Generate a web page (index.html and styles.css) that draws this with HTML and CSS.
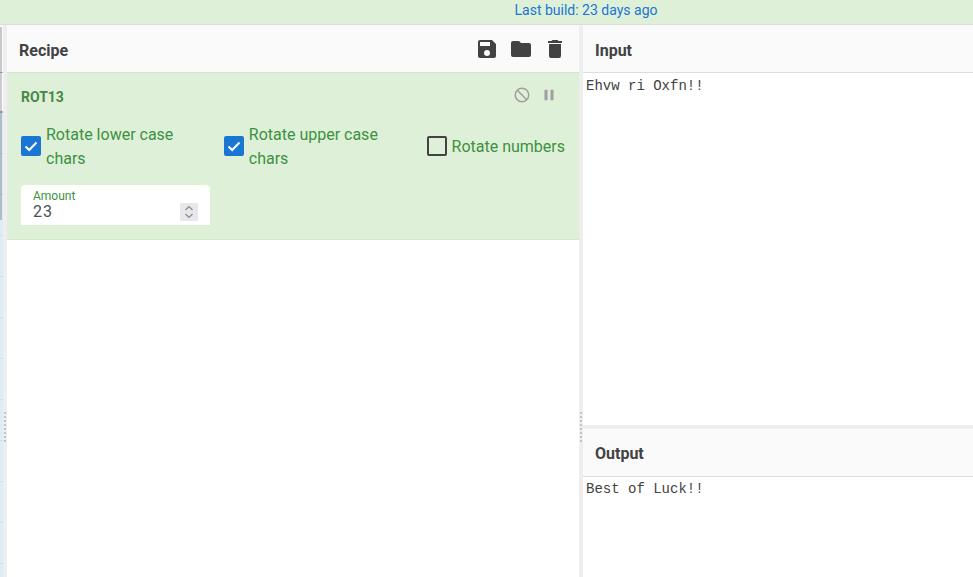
FILE: index.html
```html
<!DOCTYPE html>
<html lang="en">
<head>
<meta charset="utf-8">
<title>CyberChef</title>
<link rel="stylesheet" href="styles.css">
</head>
<body>
<div class="banner"><a class="build">Last build: 23 days ago</a></div>
<div class="workspace">
  <div class="sliver">
    <div class="sliver-top"></div>
    <div class="sliver-rows"></div>
    <div class="sliver-thumb"></div>
  </div>
  <div class="gutter"><span class="grip"></span></div>
  <section class="recipe">
    <header class="head">
      <span class="title">Recipe</span>
      <div class="head-icons">
        <svg class="icon" viewBox="0 0 24 24"><path d="M17 3H5a2 2 0 0 0-2 2v14a2 2 0 0 0 2 2h14a2 2 0 0 0 2-2V7l-4-4zm-5 16a3 3 0 1 1 0-6 3 3 0 0 1 0 6zm3-10H5V5h10v4z"/></svg>
        <svg class="icon" viewBox="0 0 24 24"><path d="M10 4H4a2 2 0 0 0-2 2v12a2 2 0 0 0 2 2h16a2 2 0 0 0 2-2V8a2 2 0 0 0-2-2h-8l-2-2z"/></svg>
        <svg class="icon" viewBox="0 0 24 24"><path d="M6 19a2 2 0 0 0 2 2h8a2 2 0 0 0 2-2V7H6v12zM19 4h-3.500l-1-1h-5l-1 1H5v2h14V4z"/></svg>
      </div>
    </header>
    <div class="op">
      <div class="op-head">
        <span class="op-name">ROT13</span>
        <div class="op-icons">
          <svg class="mini" viewBox="0 0 24 24"><path fill-rule="evenodd" d="M12 2a10 10 0 1 1 0 20 10 10 0 0 1 0-20zM20 12a8 8 0 0 0-8-8c-1.850 0-3.550.63-4.900 1.690L18.310 16.900A7.900 7.900 0 0 0 20 12zM12 20c1.850 0 3.550-.63 4.900-1.690L5.690 7.100A7.900 7.900 0 0 0 4 12a8 8 0 0 0 8 8z"/></svg>
          <svg class="mini" viewBox="0 0 24 24"><path d="M6 19h4V5H6v14zm8-14v14h4V5h-4z"/></svg>
        </div>
      </div>
      <div class="checks">
        <label class="check">
          <span class="box on"><svg viewBox="0 0 20 20"><path d="M4.500 10.500l3.700 3.500 7.300-7.500"/></svg></span>
          <span class="check-text">Rotate lower case chars</span>
        </label>
        <label class="check">
          <span class="box on"><svg viewBox="0 0 20 20"><path d="M4.500 10.500l3.700 3.500 7.300-7.500"/></svg></span>
          <span class="check-text">Rotate upper case chars</span>
        </label>
        <label class="check check-last">
          <span class="box"></span>
          <span class="check-text">Rotate numbers</span>
        </label>
      </div>
      <div class="amount">
        <span class="amount-label">Amount</span>
        <span class="amount-value">23</span>
        <span class="spinner"><svg viewBox="0 0 18 18"><path d="M5.500 7l3.500-3.500L12.500 7M5.500 11l3.500 3.500 3.500-3.500"/></svg></span>
      </div>
    </div>
  </section>
  <div class="gutter"><span class="grip"></span></div>
  <section class="io">
    <div class="pane pane-input">
      <header class="head"><span class="title">Input</span></header>
      <pre class="text text-input">Ehvw ri Oxfn!!</pre>
    </div>
    <div class="hgutter"></div>
    <div class="pane pane-output">
      <header class="head"><span class="title">Output</span></header>
      <pre class="text">Best of Luck!!</pre>
    </div>
  </section>
</div>
</body>
</html>
```

FILE: styles.css
```css
* { box-sizing: border-box; }
html, body { margin: 0; height: 100%; overflow: hidden; }
body { width: 973px; height: 577px; background: #fff; font-family: Roboto, "Liberation Sans", sans-serif; color: #424242; display: flex; flex-direction: column; }
.banner { height: 25px; flex: none; background: #dff0d8; border-bottom: 1px solid #ddd; display: flex; justify-content: center; }
.build { margin-left: 199px; font-size: 14px; line-height: 21px; color: #1976d2; }
.workspace { flex: 1; display: flex; min-height: 0; }
.sliver { position: relative; width: 3px; flex: none; display: flex; flex-direction: column; background: #fafafa; }
.sliver-top { height: 88px; flex: none; background: linear-gradient(#fafafa 0 47px, #bbb 47px 48px, #fff 48px 86px, #bbb 86px); }
.sliver-rows { flex: 1; background: repeating-linear-gradient(#dcedf5 0 40px, #bfe6ee 40px 41px); }
.sliver-thumb { position: absolute; left: 0; top: 2px; width: 2px; height: 193px; background: rgba(0, 0, 0, .2); }
.gutter { width: 4px; flex: none; background: #eee; display: flex; align-items: flex-start; justify-content: center; padding-top: 387px; }
.grip { width: 2px; height: 30px; background: repeating-linear-gradient(#c4c4c4 0 2px, transparent 2px 4px); }
.recipe { width: 572px; flex: none; display: flex; flex-direction: column; }
.head { height: 48px; flex: none; background: #fafafa; border-bottom: 1px solid #ddd; display: flex; align-items: center; justify-content: space-between; padding: 0 12px; }
.title { font-size: 16px; font-weight: 700; color: #424242; margin-top: 4px; }
.pane-output .title { margin-top: 2px; }
.head-icons { display: flex; gap: 10px; }
.icon { width: 24px; height: 24px; fill: #424242; display: block; }
.op { height: 167px; background: #dff0d8; border-bottom: 1px solid #d6e9c6; padding: 0 14px; color: #3c8c3c; }
.op-head { height: 47px; display: flex; align-items: center; justify-content: space-between; }
.op-name { font-size: 14px; font-weight: 700; color: #468847; }
.op-icons { display: flex; gap: 9px; margin-right: 7px; margin-top: -4px; }
.mini { width: 18px; height: 18px; fill: #9e9e9e; display: block; }
.checks { display: flex; height: 64px; margin-top: -5px; }
.check { width: 203px; display: flex; align-items: center; gap: 5px; font-size: 16px; line-height: 24px; color: #3d9142; }
.check-last { width: auto; }
.box { width: 20px; height: 20px; flex: none; margin-top: -2px; border: 2px solid #424242; border-radius: 2px; display: block; }
.box.on { background: #1976d2; border: 0; }
.box svg { display: block; width: 20px; height: 20px; fill: none; stroke: #fff; stroke-width: 2; }
.check-text { width: 140px; }
.check-last .check-text { width: auto; white-space: nowrap; }
.amount { position: relative; width: 189px; height: 40px; margin-top: 6px; background: #fff; border-radius: 4px 4px 0 0; padding: 5px 12px 0; }
.amount-label { display: block; font-size: 12px; line-height: 12px; color: #3d9142; }
.amount-value { display: block; font-size: 16px; line-height: 20px; color: #495057; letter-spacing: 1px; }
.spinner { position: absolute; right: 12px; top: 18px; width: 18px; height: 18px; background: #e8e8ec; }
.spinner svg { display: block; width: 18px; height: 18px; fill: none; stroke: #8a8a8a; stroke-width: 1.200; }
.io { flex: 1; min-width: 0; display: flex; flex-direction: column; }
.pane { display: flex; flex-direction: column; min-height: 0; }
.pane-input { height: 400px; flex: none; }
.pane-output { flex: 1; }
.hgutter { height: 4px; flex: none; background: #eee; }
.text { margin: 0; padding: 4px 3px; flex: 1; font-family: "Liberation Mono", monospace; font-size: 14px; line-height: 17px; color: #424242; }
.text-input { padding-top: 5px; }
```
